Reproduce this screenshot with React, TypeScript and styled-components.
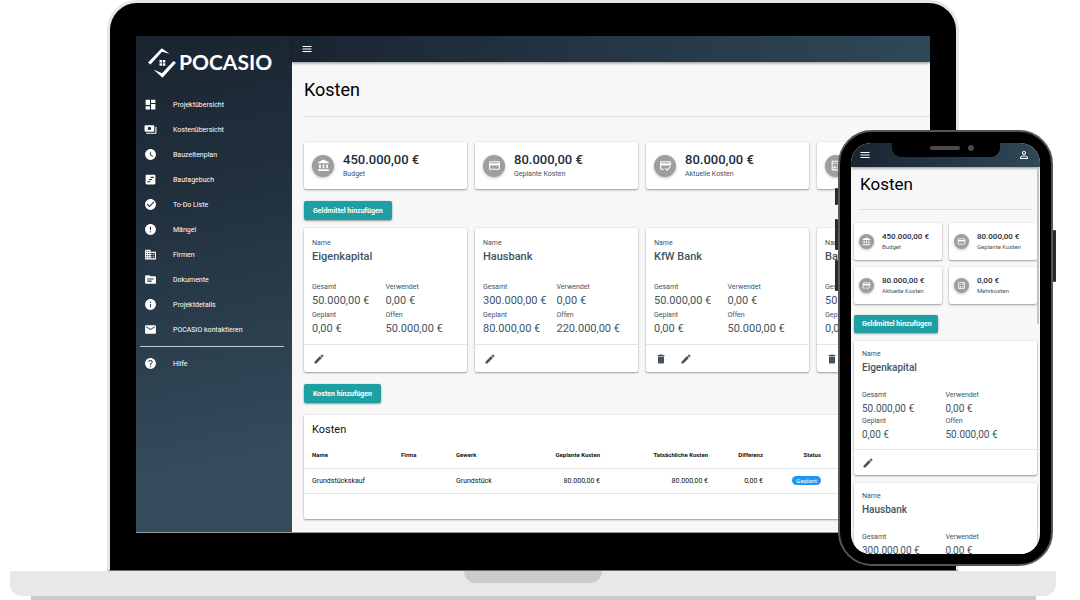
import React from "react";
import styled, { createGlobalStyle, css } from "styled-components";
import type { IconType } from "react-icons";
import {
  MdDashboard,
  MdPayments,
  MdWatchLater,
  MdCheckCircle,
  MdError,
  MdBusiness,
  MdSource,
  MdInfo,
  MdEmail,
  MdHelp,
  MdAccountBalance,
  MdCreditCard,
  MdCreditScore,
  MdDelete,
  MdEdit,
  MdMenu,
  MdPersonOutline,
  MdOutlineCalculate,
} from "react-icons/md";

const GlobalStyle = createGlobalStyle`
  *, *::before, *::after { box-sizing: border-box; }
  body {
    margin: 0;
    background: #ffffff;
    font-family: Roboto, "Liberation Sans", sans-serif;
    color: #111111;
  }
  h1, h2, h3, p, dl, dt, dd, ul { margin: 0; padding: 0; }
  button { font-family: inherit; }
`;

const elevation = "0 1px 2px rgba(0, 0, 0, 0.36), 0 0 2px rgba(0, 0, 0, 0.12)";

/* ---------- Laptop ---------- */

const Scene = styled.div`
  position: relative;
  min-width: 700px;
  overflow: hidden;
`;

const Lid = styled.div`
  margin: 0 121px 0 107px;
  padding: 33px 26px 37px;
  background: #000000;
  border: 3px solid #e6e6e6;
  border-bottom: 1px solid #6b6b6b;
  border-radius: 30px 30px 0 0;
`;

const Display = styled.div`
  display: flex;
  overflow: hidden;
  background: #f7f7f7;
  border-bottom: 1px solid #9a9a9a;
`;

const Base = styled.div`
  display: flex;
  justify-content: center;
  align-items: flex-start;
  height: 25px;
  margin: 0 24px 0 10px;
  background: #e8e8e8;
  border-radius: 0 0 12px 12px;
`;

const Groove = styled.div`
  width: 138px;
  height: 12px;
  background: #cbcbcb;
  border-radius: 0 0 12px 12px;
`;

const Foot = styled.div`
  height: 4px;
  margin: 0 44px 0 31px;
  background: #cbcbcb;
`;

/* ---------- Sidebar ---------- */

const Sidebar = styled.aside`
  flex: none;
  width: 156px;
  background: linear-gradient(168deg, #1a2430 0%, #22313f 35%, #344c5c 85%);
`;

const Brand = styled.a`
  display: flex;
  align-items: center;
  gap: 3px;
  height: 52px;
  padding-left: 12px;
  color: #ffffff;
  text-decoration: none;
  font: 700 21px/24px Lato, "Liberation Sans", sans-serif;

  svg { flex: none; }
`;

const Nav = styled.nav`
  padding-top: 4px;
`;

const NavLink = styled.a`
  display: flex;
  align-items: center;
  gap: 16px;
  height: 25px;
  padding-left: 8px;
  color: #ffffff;
  font-size: 7px;
  line-height: 12px;
  text-decoration: none;

  svg { width: 13px; height: 13px; }
`;

const NavRule = styled.hr`
  margin: 4px 8px 4px 4px;
  border: 0;
  border-top: 1px solid #c5cace;
`;

/* ---------- App shell ---------- */

const Content = styled.div`
  flex: 1;
  min-width: 0;
`;

const TopBar = styled.header<{ $compact?: boolean }>`
  position: relative;
  display: flex;
  align-items: center;
  justify-content: space-between;
  height: ${(p) => (p.$compact ? 24 : 26)}px;
  padding: ${(p) => (p.$compact ? "0 10px 0 8px" : "0 9px")};
  background: linear-gradient(100deg, #1a2431, #304858);
  box-shadow: 0 1px 3px rgba(0, 0, 0, 0.45);
`;

const IconButton = styled.button<{ $light?: boolean }>`
  display: flex;
  padding: 0;
  border: 0;
  background: none;
  color: ${(p) => (p.$light ? "#ffffff" : "#42545f")};

  svg { width: 12px; height: 12px; }
`;

const Main = styled.main<{ $compact?: boolean }>`
  padding: ${(p) => (p.$compact ? "6px 3px 0" : "16px 0 13px 12px")};
`;

const PageTitle = styled.h1<{ $compact?: boolean }>`
  font-weight: 400;
  color: #000000;
  ${(p) =>
    p.$compact
      ? css`font-size: 17px; line-height: 22px; padding-left: 6px;`
      : css`font-size: 18px; line-height: 24px;`}
`;

const Rule = styled.hr<{ $compact?: boolean }>`
  margin: ${(p) => (p.$compact ? "14px 6px 13px" : "14px 0 25px")};
  border: 0;
  border-top: 1px solid #dcdcdc;
`;

const CardRow = styled.div<{ $compact?: boolean }>`
  display: grid;
  ${(p) =>
    p.$compact
      ? css`grid-template-columns: 1fr 1fr; gap: 7px;`
      : css`grid-template-columns: repeat(4, 163px); gap: 8px;`}
`;

const FundList = styled.div`
  display: flex;
  flex-direction: column;
  gap: 8px;
`;

const Card = styled.section`
  background: #ffffff;
  border-radius: 2px;
  box-shadow: ${elevation};
`;

const StatCard = styled(Card)<{ $compact?: boolean }>`
  display: flex;
  align-items: center;
  color: #1e2c3a;
  ${(p) =>
    p.$compact
      ? css`height: 37px; gap: 8px; padding-left: 5px;`
      : css`height: 47px; gap: 9px; padding-left: 8px;`}
`;

const StatIcon = styled.span<{ $compact?: boolean }>`
  display: flex;
  align-items: center;
  justify-content: center;
  flex: none;
  width: ${(p) => (p.$compact ? 15 : 22)}px;
  height: ${(p) => (p.$compact ? 15 : 22)}px;
  border-radius: 50%;
  background: #9e9e9e;
  color: #ffffff;
  box-shadow: 0 1px 3px rgba(0, 0, 0, 0.25);

  svg {
    width: ${(p) => (p.$compact ? 9 : 13)}px;
    height: ${(p) => (p.$compact ? 9 : 13)}px;
  }
`;

const StatValue = styled.p<{ $compact?: boolean }>`
  font-weight: 500;
  white-space: nowrap;
  ${(p) =>
    p.$compact
      ? css`font-size: 8px; line-height: 10px;`
      : css`font-size: 13px; line-height: 16px;`}
`;

const StatLabel = styled.p<{ $compact?: boolean }>`
  color: #42545f;
  white-space: nowrap;
  ${(p) =>
    p.$compact
      ? css`font-size: 6px; line-height: 10px;`
      : css`font-size: 7px; line-height: 12px;`}
`;

const ActionButton = styled.button<{ $compact?: boolean }>`
  display: block;
  height: ${(p) => (p.$compact ? 18 : 19)}px;
  margin: ${(p) => (p.$compact ? "11px 0 8px" : "12px 0")};
  padding: ${(p) => (p.$compact ? "0 6px 0 8px" : "0 9px")};
  border: 0;
  border-radius: 2px;
  background: #1e9fa3;
  color: #ffffff;
  font-size: 7px;
  font-weight: 700;
  line-height: 12px;
  box-shadow: ${elevation};
`;

const FundButton = styled(ActionButton)`
  margin-bottom: 8px;
`;

const FundBody = styled.div<{ $compact?: boolean }>`
  padding: ${(p) => (p.$compact ? "8px 8px 7px" : "9px 8px 7px")};
  color: #42545f;
`;

const Label = styled.dt<{ $compact?: boolean }>`
  font-size: 7px;
  line-height: ${(p) => (p.$compact ? 11 : 12)}px;
`;

const FundName = styled.h2<{ $compact?: boolean }>`
  font-weight: 500;
  ${(p) =>
    p.$compact
      ? css`font-size: 10px; line-height: 15px; margin-bottom: 15px;`
      : css`font-size: 11px; line-height: 16px; margin-bottom: 16px;`}
`;

const Figures = styled.dl`
  display: grid;
  grid-template-columns: 1fr 1fr;
`;

const Amount = styled.dd<{ $compact?: boolean }>`
  white-space: nowrap;
  ${(p) =>
    p.$compact
      ? css`font-size: 10px; line-height: 15px;`
      : css`font-size: 11px; line-height: 16px;`}
`;

const FundActions = styled.footer<{ $compact?: boolean }>`
  display: flex;
  align-items: center;
  gap: 13px;
  height: ${(p) => (p.$compact ? 26 : 28)}px;
  padding: 0 ${(p) => (p.$compact ? 8 : 9)}px;
  border-top: 1px solid #e4e4e4;
`;

/* ---------- Cost table ---------- */

const TableCard = styled(Card)`
  height: 104px;
  margin-right: 12px;
  overflow: hidden;
`;

const TableTitle = styled.h2`
  padding: 7px 8px 5px;
  font-size: 11px;
  line-height: 16px;
  font-weight: 400;
`;

const Table = styled.table`
  width: 100%;
  table-layout: fixed;
  border-collapse: collapse;
  line-height: 12px;
`;

const cell = css<{ $end?: boolean }>`
  height: 25px;
  padding: 0 8px;
  border-bottom: 1px solid #e4e4e4;
  text-align: ${(p) => (p.$end ? "right" : "left")};
  white-space: nowrap;
`;

const Th = styled.th<{ $end?: boolean; $width?: number }>`
  ${cell}
  width: ${(p) => (p.$width ? `${p.$width}px` : "auto")};
  font-size: 6px;
  font-weight: 700;
`;

const Td = styled.td<{ $end?: boolean }>`
  ${cell}
  font-size: 7px;
  font-weight: 400;
`;

const Badge = styled.span`
  display: inline-block;
  padding: 0 4px;
  border-radius: 5px;
  background: #2196f3;
  color: #ffffff;
  font-size: 6px;
  line-height: 9px;
`;

/* ---------- Phone ---------- */

const Phone = styled.div`
  position: absolute;
  top: 130px;
  right: 27px;
  width: 215px;
  height: 436px;
  padding: 11px;
  background: #000000;
  border: 2px solid #555555;
  border-radius: 34px;
`;

const PhoneScreen = styled.div`
  position: relative;
  height: 411px;
  overflow: hidden;
  background: #f7f7f7;
  border-radius: 20px;
`;

const PhoneNotch = styled.div`
  position: absolute;
  top: 0;
  left: 41px;
  display: flex;
  align-items: flex-start;
  justify-content: flex-end;
  gap: 8px;
  width: 108px;
  height: 14px;
  padding: 2px 26px 0 0;
  background: #000000;
  border-radius: 0 0 9px 9px;
`;

const Speaker = styled.span`
  width: 30px;
  height: 4px;
  margin-top: 1px;
  background: #4a4a4a;
  border-radius: 2px;
`;

const Camera = styled.span`
  width: 6px;
  height: 6px;
  background: #4a4a4a;
  border-radius: 50%;
`;

const ScrollThumb = styled.div`
  position: absolute;
  top: 24px;
  right: 1px;
  width: 2px;
  height: 157px;
  background: #c4c4c4;
`;

const SideKey = styled.span<{ $top: number; $height: number; $right?: boolean }>`
  position: absolute;
  top: ${(p) => p.$top}px;
  ${(p) => (p.$right ? "right: -5px;" : "left: -5px;")}
  width: 3px;
  height: ${(p) => p.$height}px;
  background: #2b2b2b;
  border-radius: 1px;
`;

/* ---------- Data ---------- */

const TimelineIcon = () => (
  <svg viewBox="0 0 24 24" fill="currentColor" aria-hidden="true">
    <path d="M19 3H5c-1.1 0-2 .9-2 2v14c0 1.1.9 2 2 2h14c1.1 0 2-.9 2-2V5c0-1.1-.9-2-2-2zm-7 14H6v-2h6v2zm3-4H9v-2h6v2zm3-4h-6V7h6v2z" />
  </svg>
);

const LogoMark = () => (
  <svg width="28" height="32" viewBox="0 0 28 32" fill="#ffffff" aria-hidden="true">
    <path d="M0 16.500 13.700 2.300 21.500 7.800 14 5.800 2.500 18.500z" />
    <path d="M28 16.800 14.500 31.800 5.500 23.500 14 27.300 25.500 15z" />
    <path d="M11.500 14H14v2.500h-2.500zM14.800 14h2.500v2.500h-2.500zM11.500 17.300H14v2.500h-2.500zM14.800 17.300h2.500v2.500h-2.500z" />
  </svg>
);

const navItems: { text: string; icon: IconType | React.FC }[] = [
  { text: "Projektübersicht", icon: MdDashboard },
  { text: "Kostenübersicht", icon: MdPayments },
  { text: "Bauzeitenplan", icon: MdWatchLater },
  { text: "Bautagebuch", icon: TimelineIcon },
  { text: "To-Do Liste", icon: MdCheckCircle },
  { text: "Mängel", icon: MdError },
  { text: "Firmen", icon: MdBusiness },
  { text: "Dokumente", icon: MdSource },
  { text: "Projektdetails", icon: MdInfo },
  { text: "POCASIO kontaktieren", icon: MdEmail },
];

const stats = [
  { value: "450.000,00 €", label: "Budget", icon: MdAccountBalance },
  { value: "80.000,00 €", label: "Geplante Kosten", icon: MdCreditCard },
  { value: "80.000,00 €", label: "Aktuelle Kosten", icon: MdCreditScore },
  { value: "0,00 €", label: "Mehrkosten", icon: MdOutlineCalculate },
];

interface Fund {
  name: string;
  total: string;
  used: string;
  planned: string;
  open: string;
  removable?: boolean;
}

const funds: Fund[] = [
  { name: "Eigenkapital", total: "50.000,00 €", used: "0,00 €", planned: "0,00 €", open: "50.000,00 €" },
  { name: "Hausbank", total: "300.000,00 €", used: "0,00 €", planned: "80.000,00 €", open: "220.000,00 €" },
  { name: "KfW Bank", total: "50.000,00 €", used: "0,00 €", planned: "0,00 €", open: "50.000,00 €", removable: true },
  { name: "Bank", total: "50.000,00 €", used: "0,00 €", planned: "0,00 €", open: "50.000,00 €", removable: true },
];

/* ---------- Parts ---------- */

const Stats = ({ compact }: { compact?: boolean }) => (
  <CardRow $compact={compact}>
    {stats.map(({ value, label, icon: Icon }) => (
      <StatCard key={label} $compact={compact}>
        <StatIcon $compact={compact}>
          <Icon />
        </StatIcon>
        <div>
          <StatValue $compact={compact}>{value}</StatValue>
          <StatLabel $compact={compact}>{label}</StatLabel>
        </div>
      </StatCard>
    ))}
  </CardRow>
);

const FundCard = ({ fund, compact }: { fund: Fund; compact?: boolean }) => (
  <Card>
    <FundBody $compact={compact}>
      <Label as="p" $compact={compact}>Name</Label>
      <FundName $compact={compact}>{fund.name}</FundName>
      <Figures>
        <div>
          <Label $compact={compact}>Gesamt</Label>
          <Amount $compact={compact}>{fund.total}</Amount>
        </div>
        <div>
          <Label $compact={compact}>Verwendet</Label>
          <Amount $compact={compact}>{fund.used}</Amount>
        </div>
        <div>
          <Label $compact={compact}>Geplant</Label>
          <Amount $compact={compact}>{fund.planned}</Amount>
        </div>
        <div>
          <Label $compact={compact}>Offen</Label>
          <Amount $compact={compact}>{fund.open}</Amount>
        </div>
      </Figures>
    </FundBody>
    <FundActions $compact={compact}>
      {fund.removable && (
        <IconButton type="button" aria-label="Löschen">
          <MdDelete />
        </IconButton>
      )}
      <IconButton type="button" aria-label="Bearbeiten">
        <MdEdit />
      </IconButton>
    </FundActions>
  </Card>
);

const CostTable = () => (
  <TableCard>
    <TableTitle>Kosten</TableTitle>
    <Table>
      <thead>
        <tr>
          <Th $width={89}>Name</Th>
          <Th $width={55}>Firma</Th>
          <Th $width={70}>Gewerk</Th>
          <Th $width={90} $end>Geplante Kosten</Th>
          <Th $width={108} $end>Tatsächliche Kosten</Th>
          <Th $width={55} $end>Differenz</Th>
          <Th $width={58} $end>Status</Th>
          <Th />
        </tr>
      </thead>
      <tbody>
        <tr>
          <Td>Grundstückskauf</Td>
          <Td />
          <Td>Grundstück</Td>
          <Td $end>80.000,00 €</Td>
          <Td $end>80.000,00 €</Td>
          <Td $end>0,00 €</Td>
          <Td $end>
            <Badge>Geplant</Badge>
          </Td>
          <Td />
        </tr>
      </tbody>
    </Table>
  </TableCard>
);

export default function App() {
  return (
    <>
      <GlobalStyle />
      <Scene>
        <Lid>
          <Display>
            <Sidebar>
              <Brand href="#">
                <LogoMark />
                POCASIO
              </Brand>
              <Nav>
                {navItems.map(({ text, icon: Icon }) => (
                  <NavLink key={text} href="#">
                    <Icon />
                    {text}
                  </NavLink>
                ))}
                <NavRule />
                <NavLink href="#">
                  <MdHelp />
                  Hilfe
                </NavLink>
              </Nav>
            </Sidebar>
            <Content>
              <TopBar>
                <IconButton type="button" $light aria-label="Menü">
                  <MdMenu />
                </IconButton>
              </TopBar>
              <Main>
                <PageTitle>Kosten</PageTitle>
                <Rule />
                <Stats />
                <FundButton type="button">Geldmittel hinzufügen</FundButton>
                <CardRow>
                  {funds.map((fund) => (
                    <FundCard key={fund.name} fund={fund} />
                  ))}
                </CardRow>
                <ActionButton type="button">Kosten hinzufügen</ActionButton>
                <CostTable />
              </Main>
            </Content>
          </Display>
        </Lid>
        <Base>
          <Groove />
        </Base>
        <Foot />

        <Phone>
          <SideKey $top={56} $height={17} />
          <SideKey $top={87} $height={31} />
          <SideKey $top={128} $height={31} />
          <SideKey $top={98} $height={52} $right />
          <PhoneScreen>
            <TopBar $compact>
              <IconButton type="button" $light aria-label="Menü">
                <MdMenu />
              </IconButton>
              <IconButton type="button" $light aria-label="Profil">
                <MdPersonOutline />
              </IconButton>
            </TopBar>
            <PhoneNotch>
              <Speaker />
              <Camera />
            </PhoneNotch>
            <Main as="div" $compact>
              <PageTitle as="h2" $compact>Kosten</PageTitle>
              <Rule $compact />
              <Stats compact />
              <ActionButton type="button" $compact>Geldmittel hinzufügen</ActionButton>
              <FundList>
                {funds.slice(0, 2).map((fund) => (
                  <FundCard key={fund.name} fund={fund} compact />
                ))}
              </FundList>
            </Main>
            <ScrollThumb />
          </PhoneScreen>
        </Phone>
      </Scene>
    </>
  );
}
